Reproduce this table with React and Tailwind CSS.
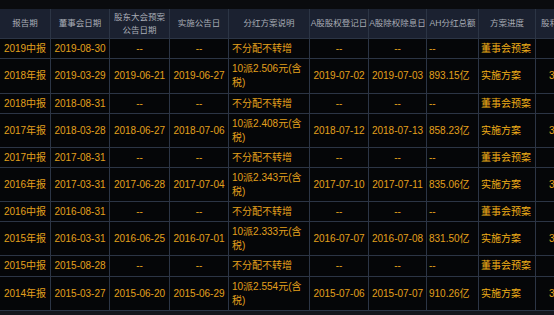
import React from 'react';

const headers = [
  { label: '报告期' },
  { label: '董事会日期' },
  { label: '股东大会预案公告日期', wrap: true },
  { label: '实施公告日' },
  { label: '分红方案说明' },
  { label: 'A股股权登记日' },
  { label: 'A股除权除息日' },
  { label: 'AH分红总额' },
  { label: '方案进度' },
  { label: '股利支付率', last: true },
];

const rows = [
  ['2019中报', '2019-08-30', '--', '--', '不分配不转增', '--', '--', '--', '董事会预案', ''],
  ['2018年报', '2019-03-29', '2019-06-21', '2019-06-27', '10派2.506元(含税)', '2019-07-02', '2019-07-03', '893.15亿', '实施方案', '30.01%'],
  ['2018中报', '2018-08-31', '--', '--', '不分配不转增', '--', '--', '--', '董事会预案', ''],
  ['2017年报', '2018-03-28', '2018-06-27', '2018-07-06', '10派2.408元(含税)', '2018-07-12', '2018-07-13', '858.23亿', '实施方案', '30.01%'],
  ['2017中报', '2017-08-31', '--', '--', '不分配不转增', '--', '--', '--', '董事会预案', ''],
  ['2016年报', '2017-03-31', '2017-06-28', '2017-07-04', '10派2.343元(含税)', '2017-07-10', '2017-07-11', '835.06亿', '实施方案', '30.04%'],
  ['2016中报', '2016-08-31', '--', '--', '不分配不转增', '--', '--', '--', '董事会预案', ''],
  ['2015年报', '2016-03-31', '2016-06-25', '2016-07-01', '10派2.333元(含税)', '2016-07-07', '2016-07-08', '831.50亿', '实施方案', '30.02%'],
  ['2015中报', '2015-08-28', '--', '--', '不分配不转增', '--', '--', '--', '董事会预案', ''],
  ['2014年报', '2015-03-27', '2015-06-20', '2015-06-29', '10派2.554元(含税)', '2015-07-06', '2015-07-07', '910.26亿', '实施方案', '33.00%'],
];

// per-column alignment of body cells
const align = [
  'justify-center',
  'justify-center',
  'justify-center',
  'justify-center',
  'justify-start pl-[3px] pr-[2px]',
  'justify-center',
  'justify-center',
  'justify-start pl-[2px]',
  'justify-start pl-[2px]',
  'justify-start pl-[13px]',
];

export default function App() {
  return (
    <div
      className="w-[554px] h-[315px] overflow-hidden bg-[#0a0b0e] flex flex-col"
      style={{ fontFamily: '"Liberation Sans", "Noto Sans CJK SC", sans-serif' }}
    >
      {/* top strip */}
      <div className="h-[9px] shrink-0 bg-[#0a0b0e]" />

      <div className="grid grid-cols-[51px_59px_60px_59px_81px_59px_58px_52px_57px_70px] grid-rows-[30px_20px_35px_20px_34px_20px_34px_20px_34px_21px_34px] w-[606px] shrink-0">
        {/* Header */}
        {headers.map((h) => (
          <div
            key={h.label}
            className={
              'bg-[#1b2130] border-r border-b border-[#2c3545] flex items-center text-[8.5px] leading-[13px] text-[#a9adb6] ' +
              (h.last ? 'justify-start pl-[5px] whitespace-nowrap' : 'justify-center text-center px-[1px]')
            }
          >
            {h.wrap ? (
              <span>
                股东大会预案
                <br />
                公告日期
              </span>
            ) : (
              <span className="whitespace-nowrap">{h.label}</span>
            )}
          </div>
        ))}

        {/* Body */}
        {rows.map((row, ri) =>
          row.map((cell, ci) => (
            <div
              key={ri + '-' + ci}
              className={
                'bg-[#050608] border-r border-b border-[#2c3545] flex items-center text-[10px] leading-[14px] ' +
                align[ci] +
                (ci === 8 ? ' text-[#f0ae18]' : ' text-[#e3a01c]') +
                (ci === 4 ? '' : ' whitespace-nowrap')
              }
            >
              <span>{cell}</span>
            </div>
          ))
        )}
      </div>

      {/* bottom strip */}
      <div className="flex-1 bg-[#14161c]" />
    </div>
  );
}
